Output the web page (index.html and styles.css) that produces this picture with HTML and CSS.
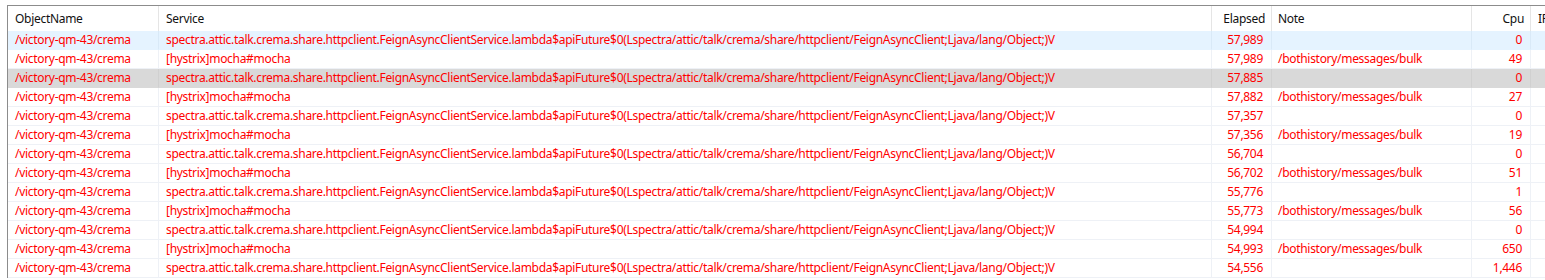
FILE: index.html
```html
<!DOCTYPE html>
<html lang="en">
<head>
    <meta charset="UTF-8">
    <title>Active Service</title>
    <link rel="stylesheet" href="styles.css">
</head>
<body>
    <div class="grid">
        <div class="row head">
            <div class="cell">ObjectName</div>
            <div class="cell">Service</div>
            <div class="cell num">Elapsed</div>
            <div class="cell note">Note</div>
            <div class="cell num">Cpu</div>
            <div class="cell">IP</div>
        </div>
        <div id="rows"></div>
    </div>

    <script>
        const lambda = 'spectra.attic.talk.crema.share.httpclient.FeignAsyncClientService.lambda$apiFuture$0(Lspectra/attic/talk/crema/share/httpclient/FeignAsyncClient;Ljava/lang/Object;)V';
        const hystrix = '[hystrix]mocha#mocha';
        const bulk = '/bothistory/messages/bulk';

        // elapsed, cpu, hystrix row?
        const data = [
            ['57,989', '0', false],
            ['57,989', '49', true],
            ['57,885', '0', false],
            ['57,882', '27', true],
            ['57,357', '0', false],
            ['57,356', '19', true],
            ['56,704', '0', false],
            ['56,702', '51', true],
            ['55,776', '1', false],
            ['55,773', '56', true],
            ['54,994', '0', false],
            ['54,993', '650', true],
            ['54,556', '1,446', false]
        ];

        let html = '';
        data.forEach(function (d, i) {
            let cls = 'row';
            if (i === 0) cls += ' hover';
            if (i === 2) cls += ' selected';
            html += `
                <div class="${cls}">
                    <div class="cell">/victory-qm-43/crema</div>
                    <div class="cell">${d[2] ? hystrix : lambda}</div>
                    <div class="cell num">${d[0]}</div>
                    <div class="cell note">${d[2] ? bulk : ''}</div>
                    <div class="cell num">${d[1]}</div>
                    <div class="cell"></div>
                </div>`;
        });
        document.getElementById('rows').innerHTML = html;
    </script>
</body>
</html>
```

FILE: styles.css
```css
html, body {
    margin: 0;
    background: #fff;
    overflow: hidden;
}
body {
    padding: 5px 0 0 7px;
    font-family: 'Noto Sans', sans-serif;
    font-size: 12px;
    letter-spacing: -0.3px;
}
.grid {
    border-top: 1px solid #8c8c8c;
    border-left: 1px solid #8c8c8c;
    width: 1640px;
}
.row {
    display: grid;
    grid-template-columns: 151px 1053px 60px 200px 59px 117px;
    height: 19px;
    color: #ff0000;
}
.cell {
    box-sizing: border-box;
    padding: 0 7px;
    border-right: 1px solid #eef1f6;
    border-bottom: 1px solid #eef1f6;
    white-space: nowrap;
    overflow: hidden;
    line-height: 18px;
}
.cell.num {
    text-align: right;
    padding-right: 8px;
}
.cell.note {
    padding-left: 6px;
}
.row.head {
    height: 25px;
    color: #111;
}
.head .cell {
    line-height: 25px;
    border-bottom: none;
    border-right-color: #e5e5e5;
}
.head .cell.num {
    padding-right: 6px;
}
.row.hover {
    background: #e5f3ff;
}
.row.hover .cell {
    border-color: #e5f3ff;
    border-right-color: #d9e9f7;
}
.row.selected {
    background: #d9d9d9;
}
.row.selected .cell {
    border-color: #d9d9d9;
    border-right-color: #d0d0d0;
}
```
